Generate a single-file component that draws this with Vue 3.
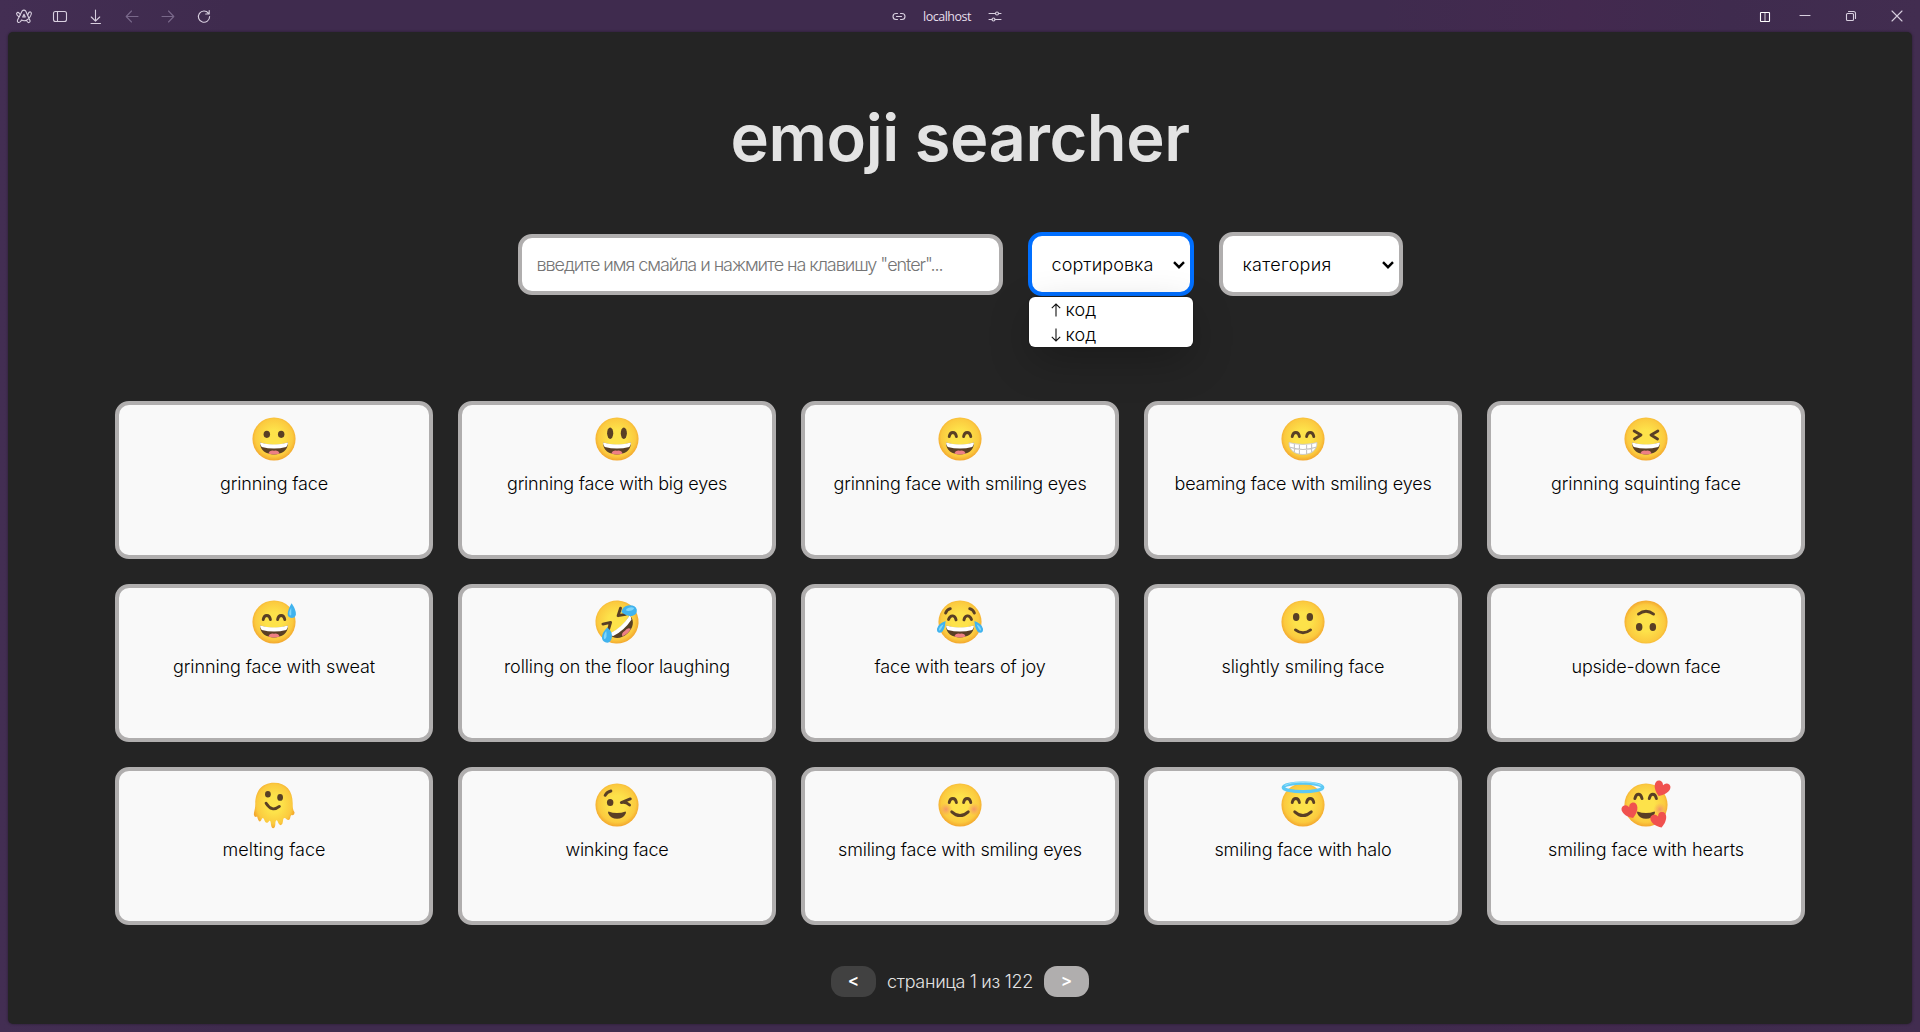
<script setup>
import { computed } from 'vue'

const cards = [
  { name: 'grinning face', w: 108, eyes: 'dots', mouth: 'open' },
  { name: 'grinning face with big eyes', w: 220, eyes: 'tall', mouth: 'open' },
  { name: 'grinning face with smiling eyes', w: 253, eyes: 'arc', mouth: 'open' },
  { name: 'beaming face with smiling eyes', w: 257, eyes: 'arc', mouth: 'teeth' },
  { name: 'grinning squinting face', w: 190, eyes: 'squint', mouth: 'open' },
  { name: 'grinning face with sweat', w: 202, eyes: 'arc', mouth: 'open', extra: 'sweat' },
  { name: 'rolling on the floor laughing', w: 226, eyes: 'squint', mouth: 'laugh', extra: 'rofl', turn: -42 },
  { name: 'face with tears of joy', w: 171, eyes: 'joy', mouth: 'open', extra: 'tears' },
  { name: 'slightly smiling face', w: 163, eyes: 'dotsLow', mouth: 'smile' },
  { name: 'upside-down face', w: 149, eyes: 'dotsLow', mouth: 'smile', turn: 180 },
  { name: 'melting face', w: 103, eyes: 'melt', mouth: 'melt' },
  { name: 'winking face', w: 103, eyes: 'wink', mouth: 'half' },
  { name: 'smiling face with smiling eyes', w: 244, eyes: 'arc', mouth: 'soft', extra: 'blush' },
  { name: 'smiling face with halo', w: 177, eyes: 'arc', mouth: 'soft', extra: 'halo' },
  { name: 'smiling face with hearts', w: 196, eyes: 'arcHigh', mouth: 'half', extra: 'hearts' }
]
const page = 1
const total = 122
const pageText = computed(() => `страница ${page} из ${total}`)

/* Tracks the text so that its line takes the given width. */
const vFit = {
  mounted(el, { value }) {
    el.style.letterSpacing = '0px'
    const w = el.getBoundingClientRect().width
    const n = [...el.textContent.trim()].length
    el.style.letterSpacing = ((value - w) / n).toFixed(3) + 'px'
  }
}
</script>

<template>
  <div class="window">
    <header class="bar">
      <div class="nav">
        <svg class="ic" viewBox="0 0 16 16"><path d="M6 3.2Q8 1 9.800 3.200L14 12.500Q14.300 14.400 12.500 14.600Q11.200 14.500 10.500 12.200Q8 13.400 5.500 12Q4.400 14.900 2.500 14.500Q.8 13.800 1.700 11.800L6 3.200M6.700 9L8 6.200L9.300 9ZM3.200 9Q.2 7.200.6 5.400Q1.800 3.300 3.300 5.400L4.500 7M10.500 12.200Q14.900 9.500 15.400 5.300Q14.800 3 12.800 4.500L11.600 7.400" /></svg>
        <svg class="ic" viewBox="0 0 16 16"><rect x="1.500" y="3.500" width="13" height="10" rx="2" /><path d="M5.500 3.500v10" /></svg>
        <svg class="ic" viewBox="0 0 16 16"><path d="M7.500 2v11M3.300 9l4.200 4.200L11.700 9M3 15.500h9.500" /></svg>
        <svg class="ic dim" viewBox="0 0 16 16"><path d="M14 8.500H2.500M7.500 3l-5.300 5.500L7.500 14" /></svg>
        <svg class="ic dim" viewBox="0 0 16 16"><path d="M2 8.500h11.500M8.500 3l5.300 5.500L8.500 14" /></svg>
        <svg class="ic" viewBox="0 0 16 16"><path d="M12.500 5.300A5.600 5.600 0 1 0 13.600 8.500M13.200 2.500v3.500H9.700" /></svg>
      </div>
      <div class="address">
        <svg class="ic" viewBox="0 0 16 16"><path d="M6.500 5.500H5a3 3 0 0 0 0 6h1.500M9.500 5.500H11a3 3 0 0 1 0 6H9.500M5.500 8.500h5" /></svg>
        <span v-fit="48" class="host">localhost</span>
        <svg class="ic" viewBox="0 0 16 16"><path d="M2 5.500h6.500M11.500 5.500H14M2 11.500h3M8 11.500h6" /><circle cx="10" cy="5.500" r="1.500" /><circle cx="6.500" cy="11.500" r="1.500" /></svg>
      </div>
      <div class="controls">
        <svg class="ic bright" viewBox="0 0 16 16"><rect x="3.500" y="4.500" width="9" height="9" rx=".5" /><path d="M8 4.500v9" opacity=".7" /></svg>
        <svg class="ic" viewBox="0 0 16 16"><path d="M3 7.500h10" /></svg>
        <svg class="ic" viewBox="0 0 16 16"><rect x="3.500" y="5.500" width="7" height="7" rx="1" /><path d="M5.500 3.500h5a2 2 0 0 1 2 2v5" /></svg>
        <svg class="ic" viewBox="0 0 16 16"><path d="M3 3l10 10M13 3L3 13" /></svg>
      </div>
    </header>

    <main class="page">
      <h1><span v-fit="459">emoji searcher</span></h1>

      <div class="filters">
        <div class="field search"><span v-fit="406">введите имя смайла и нажмите на клавишу "enter"...</span></div>
        <div class="field select sort">
          <span v-fit="102">сортировка</span>
          <svg class="chev" viewBox="0 0 12 8"><path d="M1 1.200L6 6.200l5-5" /></svg>
          <ul class="menu">
            <li><svg viewBox="0 0 10 14"><path d="M5 13.500V1M.8 5.200L5 1L9.200 5.200" /></svg><span v-fit="31">код</span></li>
            <li><svg viewBox="0 0 10 14"><path d="M5 .5V13M.8 8.800L5 13L9.200 8.800" /></svg><span v-fit="31">код</span></li>
          </ul>
        </div>
        <div class="field select category">
          <span v-fit="89">категория</span>
          <svg class="chev" viewBox="0 0 12 8"><path d="M1 1.200L6 6.200l5-5" /></svg>
        </div>
      </div>

      <section class="grid">
        <article v-for="c in cards" :key="c.name" class="card">
          <svg class="emoji" viewBox="0 0 128 128">
            <defs>
              <radialGradient id="skin" cx=".5" cy=".47" r=".54">
                <stop offset=".35" stop-color="#fde24a" />
                <stop offset=".8" stop-color="#fbca3f" />
                <stop offset="1" stop-color="#f2a32c" />
              </radialGradient>
              <radialGradient id="rose"><stop offset="0" stop-color="#f3906a" stop-opacity=".9" /><stop offset="1" stop-color="#f7a35c" stop-opacity="0" /></radialGradient>
              <path id="heart" d="M0 18C-25 3-23-18-10-18Q-3-18 0-10Q3-18 10-18C23-18 25 3 0 18Z" />
            </defs>
            <g :transform="`rotate(${c.turn || 0} 64 64)`">
              <path v-if="c.mouth === 'melt'" fill="url(#skin)" d="M64 2C28 2 12 28 12 60C12 76 8 82 8 91Q10 100 17 96C20 107 23 114 28 107C31 101 32 98 36 103C39 113 44 118 50 109C52 107 54 107 55 114Q56 129 62 129Q68 128 68 112C70 104 73 106 75 112Q80 125 87 117Q89 110 90 102C95 96 98 105 104 106C111 105 108 94 113 92Q122 94 121 84C116 76 116 70 116 59C116 24 98 2 64 2Z" />
              <circle v-else cx="64" cy="64" r="60" fill="url(#skin)" />

              <g v-if="c.extra === 'blush' || c.extra === 'hearts'" fill="url(#rose)">
                <circle cx="25" cy="76" r="18" /><circle cx="103" cy="76" r="18" />
              </g>

              <g class="ink">
                <g v-if="c.eyes === 'dots'"><ellipse cx="44" cy="51" rx="9" ry="10" /><ellipse cx="84" cy="51" rx="9" ry="10" /></g>
                <g v-if="c.eyes === 'tall'"><ellipse cx="45" cy="48" rx="8.500" ry="16" /><ellipse cx="83" cy="48" rx="8.500" ry="16" /></g>
                <g v-if="c.eyes === 'dotsLow'"><ellipse cx="45" cy="50" rx="9" ry="11" /><ellipse cx="83" cy="50" rx="9" ry="11" /></g>
                <g v-if="c.eyes === 'melt'"><ellipse cx="47" cy="34" rx="8" ry="9" /><ellipse cx="81" cy="43" rx="8" ry="9.500" /></g>
                <ellipse v-if="c.eyes === 'wink'" cx="45" cy="57" rx="9" ry="10" />
              </g>
              <g class="line">
                <path v-if="c.eyes === 'arc'" d="M34 57Q36 46 44 46Q52 46 54 57M74 57Q76 46 84 46Q92 46 94 57" />
                <path v-if="c.eyes === 'arcHigh'" d="M33 46Q36 34 43 34Q50 34 53 46M73 46Q76 34 83 34Q90 34 93 46" />
                <path v-if="c.eyes === 'squint'" d="M31 42L50 53L32 64M97 42L78 53L96 64" />
                <path v-if="c.eyes === 'joy'" d="M32 57Q36 46 44 47Q51 48 53 58M75 58Q77 48 84 47Q92 46 96 57M24 39Q27 30 37 27M104 39Q101 30 91 27" />
                <path v-if="c.eyes === 'wink'" d="M31 37Q36 27 47 25M101 47L76 57Q88 54 99 64" />
                <path v-if="c.mouth === 'smile'" d="M43 86Q64 102 85 86" />
                <path v-if="c.mouth === 'melt'" d="M42 59Q58 85 79 68" />
                <path v-if="c.mouth === 'soft'" d="M41 83Q64 104 87 83" />
              </g>
              <g v-if="c.mouth === 'open' || c.mouth === 'laugh'">
                <path fill="#593f25" d="M25 74Q64 87 103 74C103 96 86 107 64 107C42 107 25 96 25 74Z" />
                <path fill="#fff" d="M25 74Q64 85 103 74Q103 81 98 86Q64 95 30 86Q25 81 25 74Z" />
                <path fill="#ed7f84" d="M48 104Q52 94 64 97Q76 94 80 104Q64 110 48 104Z" />
              </g>
              <g v-if="c.mouth === 'teeth'">
                <path fill="#fff" stroke="#c9c9c9" stroke-width="2.500" d="M25 74Q64 84 103 74C103 96 86 107 64 107C42 107 25 96 25 74Z" />
                <path fill="none" stroke="#c2c2c2" stroke-width="3" d="M28 87Q64 99 100 87M40 77V100M54 80V106M74 80V106M88 77V100" />
              </g>
              <path v-if="c.mouth === 'half'" class="ink" d="M40 82Q64 91 88 82Q90 84 88 88Q81 102 64 102Q47 102 40 88Q38 84 40 82Z" />
            </g>

            <path v-if="c.extra === 'sweat'" fill="#40b3ee" d="M113 12Q126 31 125 43Q123 53 113 53Q102 52 102 42Q103 29 113 12Z" />
            <path v-if="c.extra === 'sweat'" fill="#80d6fa" d="M112 24Q105 35 107 43Q109 48 112 44Z" />
            <g v-if="c.extra === 'tears'">
              <path fill="#40b3ee" d="M24 61Q3 68 0 83Q-1 95 9 94Q22 90 24 61ZM104 61Q125 68 128 83Q129 95 119 94Q106 90 104 61Z" />
              <path fill="#80d6fa" d="M18 70Q5 77 5 87Q9 91 18 70ZM110 70Q123 77 123 87Q119 91 110 70Z" />
            </g>
            <g v-if="c.extra === 'rofl'">
              <path fill="#40b3ee" d="M76 36Q80 20 94 18Q114 15 119 29Q121 43 106 47Q91 49 76 36ZM37 79Q51 90 50 105Q48 120 37 122Q24 121 22 108Q22 93 37 79Z" />
              <path fill="#80d6fa" d="M90 28Q101 20 112 25Q108 35 90 33ZM34 89Q25 100 28 111Q38 112 34 89Z" />
            </g>
            <g v-if="c.extra === 'halo'" fill="none">
              <ellipse cx="64" cy="15" rx="55" ry="12" stroke="#5cc8f4" stroke-width="9" />
              <path d="M13 10Q31 0 64 1Q97 0 115 10" stroke="#94e0fc" stroke-width="3" />
            </g>
            <g v-if="c.extra === 'hearts'" fill="#f0514f">
              <use href="#heart" transform="translate(107 20) rotate(22) scale(1.150)" />
              <use href="#heart" transform="translate(21 81) rotate(-20) scale(1.150)" />
              <use href="#heart" transform="translate(101 107) rotate(-18) scale(1.150)" />
            </g>
          </svg>
          <p><span v-fit="c.w">{{ c.name }}</span></p>
        </article>
      </section>

      <nav class="pager">
        <button class="off">&lt;</button>
        <span v-fit="146" class="count">{{ pageText }}</span>
        <button>&gt;</button>
      </nav>
    </main>
  </div>
</template>

<style>
body {
  margin: 0;
  overflow: hidden;
}
</style>

<style scoped>
.window {
  box-sizing: border-box;
  width: 1920px;
  height: 1032px;
  padding: 0 8px 8px;
  display: flex;
  flex-direction: column;
  background: linear-gradient(90deg, #432e53 0, #3f2b4e 12%, #3f2b4e 72%, #43294f 82%, #3f2b4e 90%, #422d50 100%);
  font-family: Inter, "Liberation Sans", sans-serif;
  font-weight: 350;
}
.bar {
  height: 32px;
  flex: none;
  display: flex;
  align-items: center;
  padding: 0 7px 0 8px;
}
.nav { display: flex; gap: 20px; }
.address { display: flex; align-items: center; gap: 16px; margin-left: 679px; }
.controls { display: flex; gap: 30px; margin-left: auto; }
.controls .ic:first-child { margin-right: -6px; }
.host {
  padding-top: 1px;
  font: 12.5px/17px "Open Sans", "Noto Sans", sans-serif;
  color: #e6dfeb;
  white-space: nowrap;
}
.ic {
  width: 16px;
  height: 16px;
  fill: none;
  stroke: #d8cfdf;
  stroke-width: 1.1;
  stroke-linecap: round;
  stroke-linejoin: round;
}
.dim { stroke: #79688a; }
.bright { stroke: #fff; }
.page {
  flex: 1;
  display: flex;
  flex-direction: column;
  align-items: center;
  background: #242424;
  border-radius: 5px;
  box-shadow: 0 0 3px rgba(0, 0, 0, .4);
}
h1 {
  margin: 68px 0 0;
  font-size: 65px;
  line-height: 76px;
  font-weight: 640;
  color: #e3e3e3;
  white-space: nowrap;
}
.filters {
  display: flex;
  align-items: center;
  gap: 25px;
  margin-top: 56px;
  height: 64px;
}
.field {
  box-sizing: border-box;
  height: 64px;
  display: flex;
  align-items: center;
  background: #fff;
  border: 4px solid #b0aeae;
  border-radius: 14px;
  font-size: 18px;
  line-height: 24px;
  white-space: nowrap;
  color: #000;
}
.field > span { padding-top: 2px; }
.search {
  width: 485px;
  height: 61px;
  padding-left: 15px;
  color: #757575;
}
.select {
  position: relative;
  justify-content: space-between;
  padding: 0 5px 0 20px;
}
.sort { width: 166px; border-color: #006fff; }
.category { width: 184px; }
.chev {
  width: 12px;
  height: 8px;
  margin-top: 1px;
  fill: none;
  stroke: #000;
  stroke-width: 2.4;
}
.menu {
  position: absolute;
  z-index: 2;
  left: -3px;
  top: 61px;
  width: 164px;
  height: 50px;
  margin: 0;
  padding: 0;
  list-style: none;
  background: #fff;
  border-radius: 6px;
  box-shadow: 0 14px 44px -4px rgba(0, 0, 0, .3), 0 0 2px rgba(0, 0, 0, .4);
}
.menu li {
  display: flex;
  align-items: center;
  gap: 5px;
  height: 25px;
  padding-left: 22px;
}
.menu svg {
  width: 10px;
  height: 14px;
  fill: none;
  stroke: #111;
  stroke-width: 1.1;
}
.grid {
  display: grid;
  grid-template-columns: repeat(5, 318px);
  grid-auto-rows: 158px;
  gap: 25px;
  margin-top: 105px;
}
.card {
  box-sizing: border-box;
  display: flex;
  flex-direction: column;
  align-items: center;
  padding-top: 11px;
  background: #f9f9f9;
  border: 4px solid #b0aeae;
  border-radius: 14px;
}
.emoji {
  width: 46px;
  height: 46px;
  flex: none;
  overflow: visible;
}
.ink { fill: #593f25; }
.line {
  fill: none;
  stroke: #593f25;
  stroke-width: 8;
  stroke-linecap: round;
  stroke-linejoin: round;
}
.card p {
  margin: 10px 0 0;
  font-size: 18px;
  line-height: 24px;
  color: #000;
  white-space: nowrap;
}
.pager {
  display: flex;
  align-items: center;
  gap: 11px;
  margin-top: 41px;
  height: 31px;
}
.pager button {
  width: 45px;
  height: 31px;
  padding: 0 0 3px;
  border: 0;
  border-radius: 13px;
  background: #b0aeae;
  color: #fff;
  font: 600 17px/20px Inter, sans-serif;
}
.pager .off { background: #414141; }
.count {
  font-size: 18px;
  line-height: 24px;
  color: #e3e3e3;
  white-space: nowrap;
}
</style>
